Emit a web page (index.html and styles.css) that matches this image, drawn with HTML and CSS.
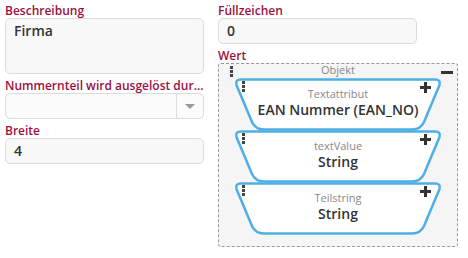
FILE: index.html
```html
<!DOCTYPE html>
<html lang="de">
<head>
    <meta charset="UTF-8">
    <meta name="viewport" content="width=device-width, initial-scale=1.0">
    <title>Nummernteil</title>
    <link rel="stylesheet" href="styles.css">
</head>
<body>
    <div class="form-grid">
        <div class="form-col left">
            <div class="field">
                <label class="field-label">Beschreibung</label>
                <div class="input textarea">Firma</div>
            </div>
            <div class="field">
                <label class="field-label">Nummernteil wird ausgelöst dur...</label>
                <div class="input select">
                    <span class="select-value"></span>
                    <span class="select-arrow"></span>
                </div>
            </div>
            <div class="field">
                <label class="field-label">Breite</label>
                <div class="input">4</div>
            </div>
        </div>

        <div class="form-col right">
            <div class="field">
                <label class="field-label">Füllzeichen</label>
                <div class="input short">0</div>
            </div>
            <div class="field">
                <label class="field-label">Wert</label>
                <div class="object-box">
                    <div class="object-head">
                        <span class="drag-dots"><i></i><i></i><i></i></span>
                        <span class="object-title">Objekt</span>
                        <span class="minus-icon"></span>
                    </div>
                    <div class="block-stack">
                        <div class="block">
                            <svg class="block-shape" width="208" height="53" viewBox="0 0 208 53">
                                <path d="M7 1.5 H201 Q207 1.5 205.5 7 L190 44 Q186.5 51.5 178 51.5 H30 Q21.5 51.5 18 44 L2.5 7 Q1 1.5 7 1.5 Z" />
                            </svg>
                            <span class="drag-dots"><i></i><i></i><i></i></span>
                            <span class="plus-icon"></span>
                            <div class="block-type">Textattribut</div>
                            <div class="block-name">EAN Nummer (EAN_NO)</div>
                        </div>
                        <div class="block">
                            <svg class="block-shape" width="208" height="53" viewBox="0 0 208 53">
                                <path d="M7 1.5 H201 Q207 1.5 205.5 7 L190 44 Q186.5 51.5 178 51.5 H30 Q21.5 51.5 18 44 L2.5 7 Q1 1.5 7 1.5 Z" />
                            </svg>
                            <span class="drag-dots"><i></i><i></i><i></i></span>
                            <span class="plus-icon"></span>
                            <div class="block-type">textValue</div>
                            <div class="block-name">String</div>
                        </div>
                        <div class="block">
                            <svg class="block-shape" width="208" height="53" viewBox="0 0 208 53">
                                <path d="M7 1.5 H201 Q207 1.5 205.5 7 L190 44 Q186.5 51.5 178 51.5 H30 Q21.5 51.5 18 44 L2.5 7 Q1 1.5 7 1.5 Z" />
                            </svg>
                            <span class="drag-dots"><i></i><i></i><i></i></span>
                            <span class="plus-icon"></span>
                            <div class="block-type">Teilstring</div>
                            <div class="block-name">String</div>
                        </div>
                    </div>
                </div>
            </div>
        </div>
    </div>
</body>
</html>
```

FILE: styles.css
```css
body {
    margin: 0;
    padding: 4px 5px;
    background: white;
    font-family: "Open Sans", "Liberation Sans", sans-serif;
    color: #333;
}

.form-grid {
    display: flex;
    gap: 14px;
}

.form-col {
    display: flex;
    flex-direction: column;
    gap: 5px;
}

.form-col.left {
    width: 199px;
}

.form-col.right {
    width: 240px;
}

.field {
    display: flex;
    flex-direction: column;
}

.field-label {
    font-size: 12px;
    line-height: 14px;
    font-weight: 600;
    color: #9c0f3f;
    white-space: nowrap;
}

.input {
    box-sizing: border-box;
    height: 26px;
    background: #f8f8f8;
    border: 1px solid #dcdcdc;
    border-radius: 5px;
    padding: 3px 8px;
    font-size: 14px;
    line-height: 18px;
    font-weight: 600;
    color: #333;
}

.input.textarea {
    height: 56px;
}

.input.short {
    width: 199px;
}

.input.select {
    display: flex;
    padding: 0;
    background: #fbfbfb;
}

.select-value {
    flex: 1;
}

.select-arrow {
    width: 26px;
    border-left: 1px solid #dcdcdc;
    display: flex;
    align-items: center;
    justify-content: center;
}

.select-arrow::after {
    content: "";
    border-left: 5px solid transparent;
    border-right: 5px solid transparent;
    border-top: 5px solid #999;
}

/* Objekt Baukasten */
.object-box {
    box-sizing: border-box;
    height: 184px;
    background: #f5f5f5;
    border: 1px dashed #9a9a9a;
    border-radius: 3px;
}

.object-head {
    position: relative;
    height: 14px;
    font-size: 11px;
    line-height: 12px;
    text-align: center;
}

.object-title {
    color: #888;
}

.object-head .drag-dots {
    position: absolute;
    left: 11px;
    top: 2px;
}

.minus-icon {
    position: absolute;
    right: 4px;
    top: 7px;
    width: 12px;
    height: 3px;
    background: #333;
}

.block-stack {
    display: flex;
    flex-direction: column;
    align-items: center;
}

.block {
    position: relative;
    width: 208px;
    height: 52px;
    box-sizing: border-box;
    padding-top: 9px;
    text-align: center;
}

.block-shape {
    position: absolute;
    left: 0;
    top: 0;
}

.block-shape path {
    fill: white;
    stroke: #4eaee6;
    stroke-width: 2.5;
}

.block .drag-dots {
    position: absolute;
    left: 8px;
    top: 3px;
}

.drag-dots {
    display: flex;
    flex-direction: column;
    gap: 1px;
}

.drag-dots i {
    display: block;
    width: 3px;
    height: 3px;
    background: #444;
}

.plus-icon {
    position: absolute;
    right: 11px;
    top: 4px;
    width: 11px;
    height: 11px;
}

.plus-icon::before,
.plus-icon::after {
    content: "";
    position: absolute;
    background: #333;
}

.plus-icon::before {
    left: 0;
    top: 4px;
    width: 11px;
    height: 3px;
}

.plus-icon::after {
    left: 4px;
    top: 0;
    width: 3px;
    height: 11px;
}

.block-type,
.block-name {
    position: relative;
}

.block-type {
    font-size: 11px;
    line-height: 14px;
    color: #888;
}

.block-name {
    font-size: 14px;
    line-height: 17px;
    font-weight: 600;
    color: #333;
}
```
